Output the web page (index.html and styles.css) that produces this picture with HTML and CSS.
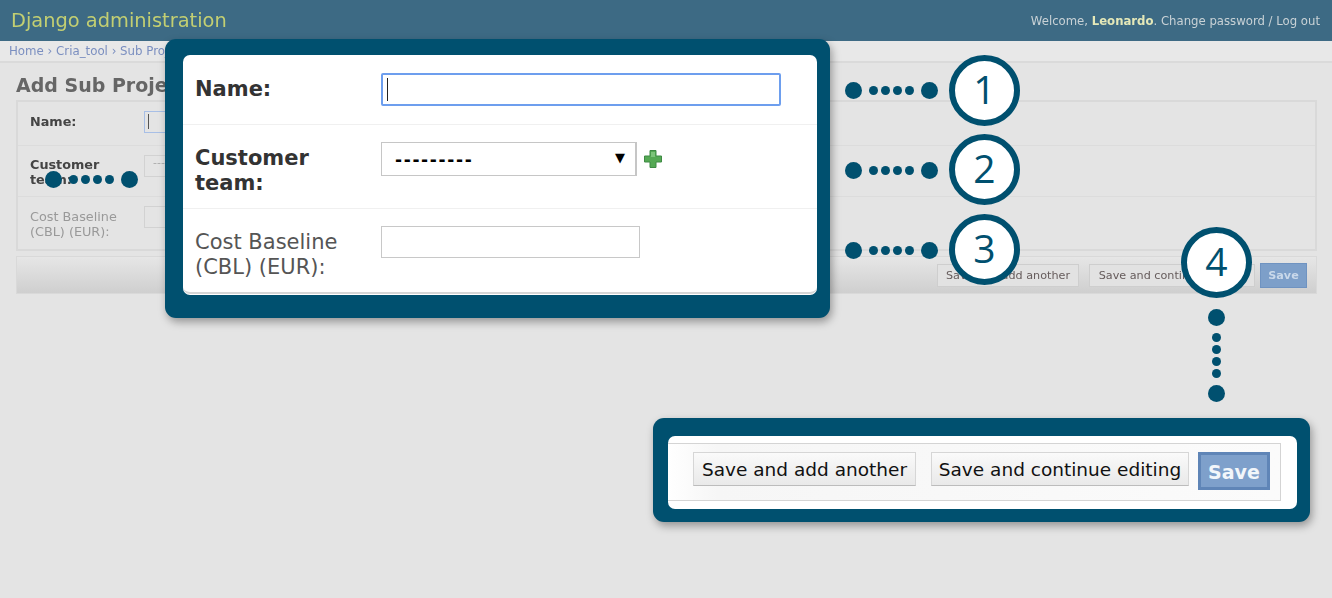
FILE: index.html
```html
<!DOCTYPE html>
<html>
<head>
    <meta charset="utf-8">
    <title>Add Sub Project</title>
    <link rel="stylesheet" href="styles.css">
</head>
<body>
    <div class="admin">
        <div class="header">
            <span class="brand">Django administration</span>
            <span class="user">Welcome, <b>Leonardo</b>. Change password / Log out</span>
        </div>
        <div class="crumbs">Home › Cria_tool › Sub Projects › Add</div>
        <h1>Add Sub Project</h1>
        <div class="module">
            <div class="mrow mrow-1"><label class="req">Name:</label><span class="mfield focus"><i class="caret"></i></span></div>
            <div class="mrow mrow-2"><label class="req">Customer team:</label><span class="mfield">---</span></div>
            <div class="mrow mrow-3"><label>Cost Baseline (CBL) (EUR):</label><span class="mfield"></span></div>
        </div>
        <div class="msubmit">
            <span class="mbtn mbtn-add">Save and add another</span>
            <span class="mbtn mbtn-cont">Save and continue editing</span>
            <span class="mbtn mbtn-save">Save</span>
        </div>
    </div>

    <!-- Callouts over the page -->
    <div class="panel panel-form">
        <div class="sheet">
            <div class="row row-name">
                <label class="req">Name:</label>
                <span class="input input-focus"><i class="caret"></i></span>
            </div>
            <div class="row row-team">
                <label class="req">Customer team:</label>
                <span class="select">---------<i class="arrow">▼</i></span>
                <svg class="plus" width="20" height="20" viewBox="0 0 20 20">
                    <path d="M7 1.500h6v5.500h5.500v6H13v5.500H7V13H1.500V7H7z" fill="#55a954" stroke="#3f8a44" stroke-width="1"/>
                    <path d="M8 3h4v5H8z" fill="#7cc47a"/>
                </svg>
            </div>
            <div class="row row-cost">
                <label>Cost Baseline (CBL) (EUR):</label>
                <span class="input input-cost"></span>
            </div>
        </div>
    </div>

    <div class="panel panel-submit">
        <div class="sheet">
            <div class="bar">
                <span class="btn btn-add">Save and add another</span>
                <span class="btn btn-cont">Save and continue editing</span>
                <span class="btn-save">Save</span>
            </div>
        </div>
    </div>

    <div class="dots d1"><i></i><b></b><b></b><b></b><b></b><i></i></div>
    <div class="dots d2"><i></i><b></b><b></b><b></b><b></b><i></i></div>
    <div class="dots d3"><i></i><b></b><b></b><b></b><b></b><i></i></div>
    <div class="dots d-left"><i></i><b></b><b></b><b></b><b></b><i></i></div>
    <div class="dots dots-v d4"><i></i><b></b><b></b><b></b><b></b><i></i></div>

    <div class="num n1">1</div>
    <div class="num n2">2</div>
    <div class="num n3">3</div>
    <div class="num n4">4</div>
</body>
</html>
```

FILE: styles.css
```css
html, body { margin: 0; padding: 0; }
body { width: 1332px; height: 598px; overflow: hidden; background: #e4e4e4; font-family: "DejaVu Sans", sans-serif; color: #333; position: relative; }

/* Admin page behind the callouts */
.admin { filter: blur(0.7px); height: 598px; }
.header { height: 41px; background: #3d6a84; display: flex; justify-content: space-between; align-items: center; padding: 0 12px 0 11px; box-shadow: 0 1px 2px rgba(0,0,0,0.2); }
.brand { color: #c3cf72; font-size: 19.400px; }
.user { color: #c9d2d6; font-size: 11.700px; }
.user b { color: #e4e8b8; }
.crumbs { height: 20px; line-height: 20px; padding-left: 9px; font-size: 11.800px; color: #7b8fc0; border-bottom: 2px solid #dadada; background: #e8e8e8; }
h1 { margin: 10px 0 0 16px; height: 27px; line-height: 24px; font-size: 19px; font-weight: bold; color: #666; }
.module { margin: 0 15px 0 16px; border: 2px solid #d9d9d9; height: 147px; }
.mrow { display: flex; border-bottom: 1px solid #dcdcdc; padding: 9px 0 0 12px; box-sizing: border-box; }
.mrow-1 { height: 44px; }
.mrow-2 { height: 51px; }
.mrow-3 { height: 50px; border-bottom: 0; }
.mrow label { width: 114px; font-size: 12.800px; line-height: 15px; color: #999; }
.mrow label.req { font-weight: bold; color: #444; }
.mrow-1 label { padding-top: 3px; }
.mrow-2 label { width: 90px; margin-right: 24px; padding-top: 2px; }
.mrow-3 label { width: 100px; margin-right: 14px; padding-top: 3px; }
.mfield { width: 120px; height: 20px; border: 1px solid #d2d2d2; font-size: 11px; color: #aaa; padding-left: 8px; }
.mfield.focus { border-color: #a8bfe6; padding-left: 3px; }
.mfield .caret { height: 15px; margin-top: 2px; background: #555; }
.msubmit { margin: 5px 15px 0 16px; height: 38px; box-sizing: border-box; background: linear-gradient(#e6e6e6, #cfcfcf); border: 1px solid #d9d9d9; display: flex; justify-content: flex-end; align-items: center; padding-right: 9px; font-size: 11.200px; }
.mbtn { box-sizing: border-box; height: 23px; line-height: 21px; text-align: center; border: 1px solid #cecece; color: #665c5c; background: #e2e2e2; white-space: nowrap; }
.mbtn-add { width: 142px; margin-right: 10px; }
.mbtn-cont { width: 166px; margin-right: 5px; }
.mbtn-save { width: 47px; height: 25px; line-height: 23px; background: #7d9fc9; border-color: #6f93c1; color: #c9d8ea; font-weight: bold; }

/* Callout panels */
.panel { position: absolute; box-sizing: border-box; background: #00506f; border-radius: 11px; box-shadow: 2px 4px 8px rgba(0,0,0,0.35); }
.sheet { background: #fff; border-radius: 7px; height: 100%; box-sizing: border-box; }
.panel-form { left: 165px; top: 39px; width: 665px; height: 279px; padding: 16px 13px 23px 18px; }
.panel-submit { left: 653px; top: 418px; width: 657px; height: 104px; padding: 18px 13px 13px 15px; }

.row { display: flex; box-sizing: border-box; padding-left: 12px; border-bottom: 1px solid #f0f0f0; align-items: flex-start; }
.row label { width: 186px; font-size: 21px; line-height: 25px; color: #555; }
.row label.req { font-weight: bold; color: #333; }
.row-name { height: 70px; padding-top: 18px; }
.row-name label { padding-top: 4px; }
.row-team { height: 84px; padding-top: 17px; }
.row-team label { width: 150px; margin-right: 36px; padding-top: 4px; }
.row-cost { height: 85px; padding-top: 17px; border-bottom: 2px solid #d6d6d6; border-radius: 0 0 7px 7px; }
.row-cost label { width: 170px; margin-right: 16px; padding-top: 4px; }

.input { display: block; box-sizing: border-box; border: 1px solid #c8c8c8; }
.input-focus { width: 400px; height: 33px; border: 2px solid #6d9eee; border-radius: 2px; padding: 3px 0 0 4px; }
.caret { display: block; width: 1px; height: 23px; background: #222; }
.input-cost { width: 259px; height: 32px; }
.select { position: relative; box-sizing: border-box; width: 256px; height: 34px; line-height: 34px; border: 1px solid #c6c6c6; border-right-width: 2px; padding-left: 13px; font-size: 17px; font-weight: bold; letter-spacing: 1.650px; color: #000; }
.arrow { position: absolute; right: 10px; top: -2px; font-style: normal; font-weight: normal; letter-spacing: 0; font-size: 13px; }
.plus { margin: 7px 0 0 6px; }

.bar { position: relative; top: 7px; box-sizing: border-box; width: 613px; height: 58px; border: 1px solid #d4d4d4; border-left: 0; background: linear-gradient(90deg, #fff, #f6f6f6 8%, #fbfbfb); display: flex; padding: 8px 10px 0 25px; }
.btn { box-sizing: border-box; height: 34px; line-height: 34px; border: 1px solid #d6d6d6; border-bottom-color: #bcbcbc; background: linear-gradient(#fafafa, #e9e9e9); font-size: 18.500px; color: #111; text-align: center; white-space: nowrap; }
.btn-add { width: 223px; margin-right: 15px; }
.btn-cont { width: 258px; margin-right: 9px; }
.btn-save { box-sizing: border-box; width: 72px; height: 38px; line-height: 34px; background: #7ea0cb; border: 3px solid #5f85b7; color: #f2f6fa; font-size: 19px; font-weight: bold; text-align: center; }

/* Dotted connectors */
.dots { position: absolute; display: flex; align-items: center; }
.dots i { display: block; width: 17px; height: 17px; border-radius: 50%; background: #00506f; }
.dots b { display: block; width: 9px; height: 9px; border-radius: 50%; background: #00506f; margin-left: 3px; }
.dots b:first-of-type { margin-left: 7px; }
.dots i:last-child { margin-left: 7px; }
.d1 { left: 845px; top: 82px; }
.d2 { left: 845px; top: 162px; }
.d3 { left: 845px; top: 242px; }
.d-left { left: 45px; top: 171px; }
.dots-v { flex-direction: column; }
.dots-v b { margin-left: 0; margin-top: 3px; }
.dots-v b:first-of-type { margin-left: 0; margin-top: 7px; }
.dots-v i:last-child { margin-left: 0; margin-top: 7px; }
.d4 { left: 1208px; top: 309px; }

/* Step numbers */
.num { position: absolute; box-sizing: border-box; width: 71px; height: 71px; border: 6px solid #00506f; border-radius: 50%; background: #fff; color: #00506f; font-family: "Open Sans", sans-serif; font-size: 39px; line-height: 55px; text-align: center; }
.n1 { left: 949px; top: 55px; }
.n2 { left: 949px; top: 134px; }
.n3 { left: 949px; top: 214px; }
.n4 { left: 1181px; top: 227px; }
```
